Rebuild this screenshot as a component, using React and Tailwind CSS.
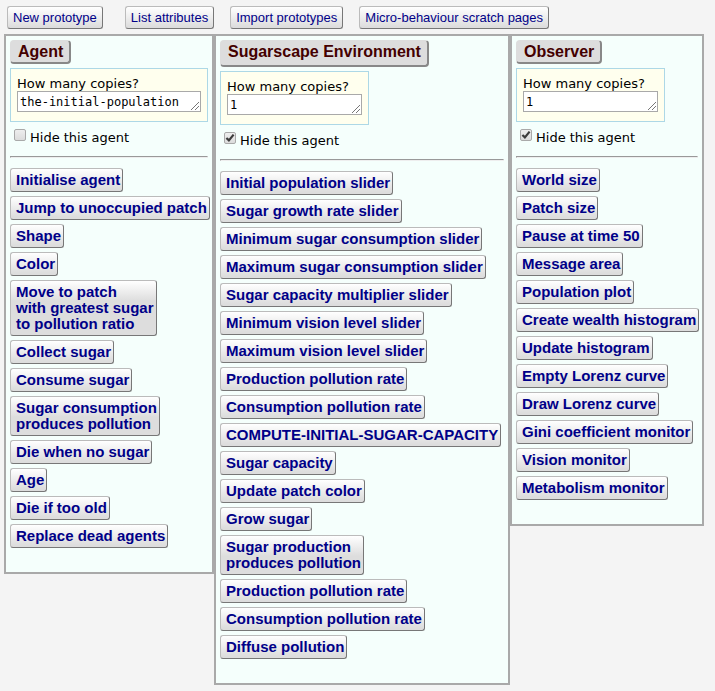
import React from "react";

const toolbar = [
  "New prototype",
  "List attributes",
  "Import prototypes",
  "Micro-behaviour scratch pages",
];

const panels = [
  {
    id: "agent",
    name: "Agent",
    copies: "the-initial-population",
    hidden: false,
    stretch: true,
    behaviours: [
      "Initialise agent",
      "Jump to unoccupied patch",
      "Shape",
      "Color",
      "Move to patch\nwith greatest sugar\nto pollution ratio",
      "Collect sugar",
      "Consume sugar",
      "Sugar consumption\nproduces pollution",
      "Die when no sugar",
      "Age",
      "Die if too old",
      "Replace dead agents",
    ],
  },
  {
    id: "environment",
    name: "Sugarscape Environment",
    copies: "1",
    hidden: true,
    tall: true,
    behaviours: [
      "Initial population slider",
      "Sugar growth rate slider",
      "Minimum sugar consumption slider",
      "Maximum sugar consumption slider",
      "Sugar capacity multiplier slider",
      "Minimum vision level slider",
      "Maximum vision level slider",
      "Production pollution rate",
      "Consumption pollution rate",
      "COMPUTE-INITIAL-SUGAR-CAPACITY",
      "Sugar capacity",
      "Update patch color",
      "Grow sugar",
      "Sugar production\nproduces pollution",
      "Production pollution rate",
      "Consumption pollution rate",
      "Diffuse pollution",
    ],
  },
  {
    id: "observer",
    name: "Observer",
    copies: "1",
    hidden: true,
    behaviours: [
      "World size",
      "Patch size",
      "Pause at time 50",
      "Message area",
      "Population plot",
      "Create wealth histogram",
      "Update histogram",
      "Empty Lorenz curve",
      "Draw Lorenz curve",
      "Gini coefficient monitor",
      "Vision monitor",
      "Metabolism monitor",
    ],
  },
];

const buttonSkin =
  "rounded-[3px] border border-t-[#bbbbbb] border-l-[#bbbbbb] border-r-[#777777] border-b-[#777777] bg-[linear-gradient(#ffffff,#dddddd_20px)] text-left whitespace-pre text-[#000088]";

function CopiesField({ panel }) {
  return (
    <div
      className={`mt-1 flex flex-col border border-[#add8e6] bg-[#ffffee] px-1.5 pt-[7px] pb-[9px] ${
        panel.stretch ? "self-stretch" : "w-[149px]"
      }`}
    >
      <label htmlFor={`${panel.id}-copies`} className="leading-[15px]">
        How many copies?
      </label>
      <div className="relative flex">
        <textarea
          id={`${panel.id}-copies`}
          rows={1}
          defaultValue={panel.copies}
          className="h-[21px] w-full resize-none overflow-hidden border border-[#a9a9a9] bg-white px-0.5 py-[3px] font-['DejaVu_Sans_Mono',monospace] text-[12px] leading-[14px] whitespace-pre outline-none"
        />
        <svg
          viewBox="0 0 8 8"
          className="pointer-events-none absolute right-0.5 bottom-0.5 size-2"
          fill="none"
          stroke="#777777"
          shapeRendering="crispEdges"
          aria-hidden="true"
        >
          <path d="M0 8L8 0M4 8L8 4" />
        </svg>
      </div>
    </div>
  );
}

function HideToggle({ panel }) {
  return (
    <label className="mt-[7px] ml-1 flex h-[18px] items-center gap-1">
      <span className="relative mb-1.5 block size-3">
        <input
          type="checkbox"
          defaultChecked={panel.hidden}
          className="peer block size-3 appearance-none rounded-[2px] border border-[#a9a9a9] bg-linear-to-b from-[#eeeeee] to-[#dcdcdc]"
        />
        <svg
          viewBox="0 0 12 12"
          className="pointer-events-none absolute inset-0 hidden size-3 peer-checked:block"
          fill="none"
          stroke="#3c3c3c"
          strokeWidth="2.2"
          aria-hidden="true"
        >
          <path d="M2.4 6L4.9 8.4L9.6 2.6" />
        </svg>
      </span>
      Hide this agent
    </label>
  );
}

function Panel({ panel }) {
  return (
    <section className="flex min-w-0 flex-col items-start border-2 border-[#a9a9a9] bg-[#f5fffc] px-1 pt-1 pb-6">
      <h2
        className={`rounded-[4px] border-t border-r-2 border-b-2 border-l border-t-[#dddddd] border-r-[#888888] border-b-[#888888] border-l-[#dddddd] bg-[#dddddd] pr-1.5 pl-[7px] font-['Liberation_Sans',Arial,sans-serif] text-[16px] leading-[21px] font-bold text-[#440000] ${
          panel.tall ? "pb-[3px]" : ""
        }`}
      >
        {panel.name}
      </h2>
      <CopiesField panel={panel} />
      <HideToggle panel={panel} />
      <hr className="mt-[9px] mb-2.5 h-0.5 w-full border border-t-[#999999] border-r-[#eeeeee] border-b-[#eeeeee] border-l-[#999999]" />
      <ul className="flex flex-col items-start gap-1">
        {panel.behaviours.map((name, index) => (
          <li key={index} className="flex">
            <button
              type="button"
              className={`${buttonSkin} py-[3px] pr-0.5 pl-[5px] font-['Liberation_Sans',Arial,sans-serif] text-[15px] leading-4 font-bold`}
            >
              {name}
            </button>
          </li>
        ))}
      </ul>
    </section>
  );
}

export default function App() {
  return (
    <div className="min-h-screen bg-[#f4f4f4] pt-1.5 pr-[11px] pb-1.5 pl-1 font-['DejaVu_Sans',Verdana,sans-serif] text-[13px] text-black">
      <nav className="ml-[3px] flex gap-4">
        {toolbar.map((name) => (
          <button
            key={name}
            type="button"
            className={`${buttonSkin} px-[5px] py-[3px] font-['Liberation_Sans',Arial,sans-serif] text-[13px] leading-[15px] first:mr-1.5`}
          >
            {name}
          </button>
        ))}
      </nav>
      <main className="mt-[5px] grid grid-cols-[210fr_296fr_194fr] items-start">
        {panels.map((panel) => (
          <Panel key={panel.id} panel={panel} />
        ))}
      </main>
    </div>
  );
}
